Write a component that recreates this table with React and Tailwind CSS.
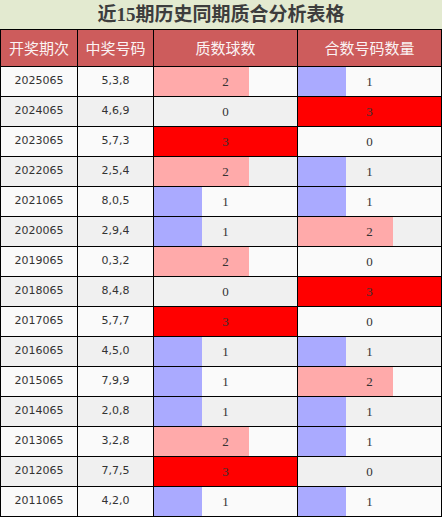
import React from 'react';

const rows = [
    ['2025065', '5,3,8', 2, 1],
    ['2024065', '4,6,9', 0, 3],
    ['2023065', '5,7,3', 3, 0],
    ['2022065', '2,5,4', 2, 1],
    ['2021065', '8,0,5', 1, 1],
    ['2020065', '2,9,4', 1, 2],
    ['2019065', '0,3,2', 2, 0],
    ['2018065', '8,4,8', 0, 3],
    ['2017065', '5,7,7', 3, 0],
    ['2016065', '4,5,0', 1, 1],
    ['2015065', '7,9,9', 1, 2],
    ['2014065', '2,0,8', 1, 1],
    ['2013065', '3,2,8', 2, 1],
    ['2012065', '7,7,5', 3, 0],
    ['2011065', '4,2,0', 1, 1],
];

const barColors = { 1: '#aaaaff', 2: '#ffaaaa', 3: '#ff0000' };

const cols = 'grid grid-cols-[77px_76px_144px_144px]';

const BarCell = ({ value }) => {
    const pct = (value / 3) * 100;
    const style = value > 0
        ? { background: `linear-gradient(to right, ${barColors[value]} ${pct}%, transparent ${pct}%)` }
        : undefined;
    return (
        <div
            className="flex items-center justify-center border-r border-black text-[13px] text-[#333] font-['Liberation_Serif',serif]"
            style={style}
        >
            {value}
        </div>
    );
};

const App = () => {
    return (
        <div className="w-[442px] bg-white">
            <div className="h-[29px] bg-[#e3ead0] flex items-center justify-center text-[19px] font-bold text-[#3d3d3d] font-['Liberation_Serif','Noto_Sans_CJK_SC',serif] leading-none">
                近15期历史同期质合分析表格
            </div>
            <div className="border-l border-black">
                <div className={`${cols} h-[38px] border-y border-black bg-[#cd5c5c] text-[15px] text-[#fbf3f3] font-['Noto_Sans_CJK_SC',sans-serif]`}>
                    <div className="flex items-center justify-center border-r border-black">开奖期次</div>
                    <div className="flex items-center justify-center border-r border-black">中奖号码</div>
                    <div className="flex items-center justify-center border-r border-black">质数球数</div>
                    <div className="flex items-center justify-center border-r border-black">合数号码数量</div>
                </div>
                {rows.map(([period, nums, prime, comp], i) => (
                    <div
                        key={period}
                        className={`${cols} h-[30px] border-b border-black ${i % 2 === 0 ? 'bg-[#fafafa]' : 'bg-[#f0f0f0]'}`}
                    >
                        <div className="flex items-center justify-center border-r border-black text-[11px] text-[#333] font-['DejaVu_Sans',sans-serif]">{period}</div>
                        <div className="flex items-center justify-center border-r border-black text-[11px] text-[#333] font-['DejaVu_Sans',sans-serif]">{nums}</div>
                        <BarCell value={prime} />
                        <BarCell value={comp} />
                    </div>
                ))}
            </div>
        </div>
    );
};

export default App;
